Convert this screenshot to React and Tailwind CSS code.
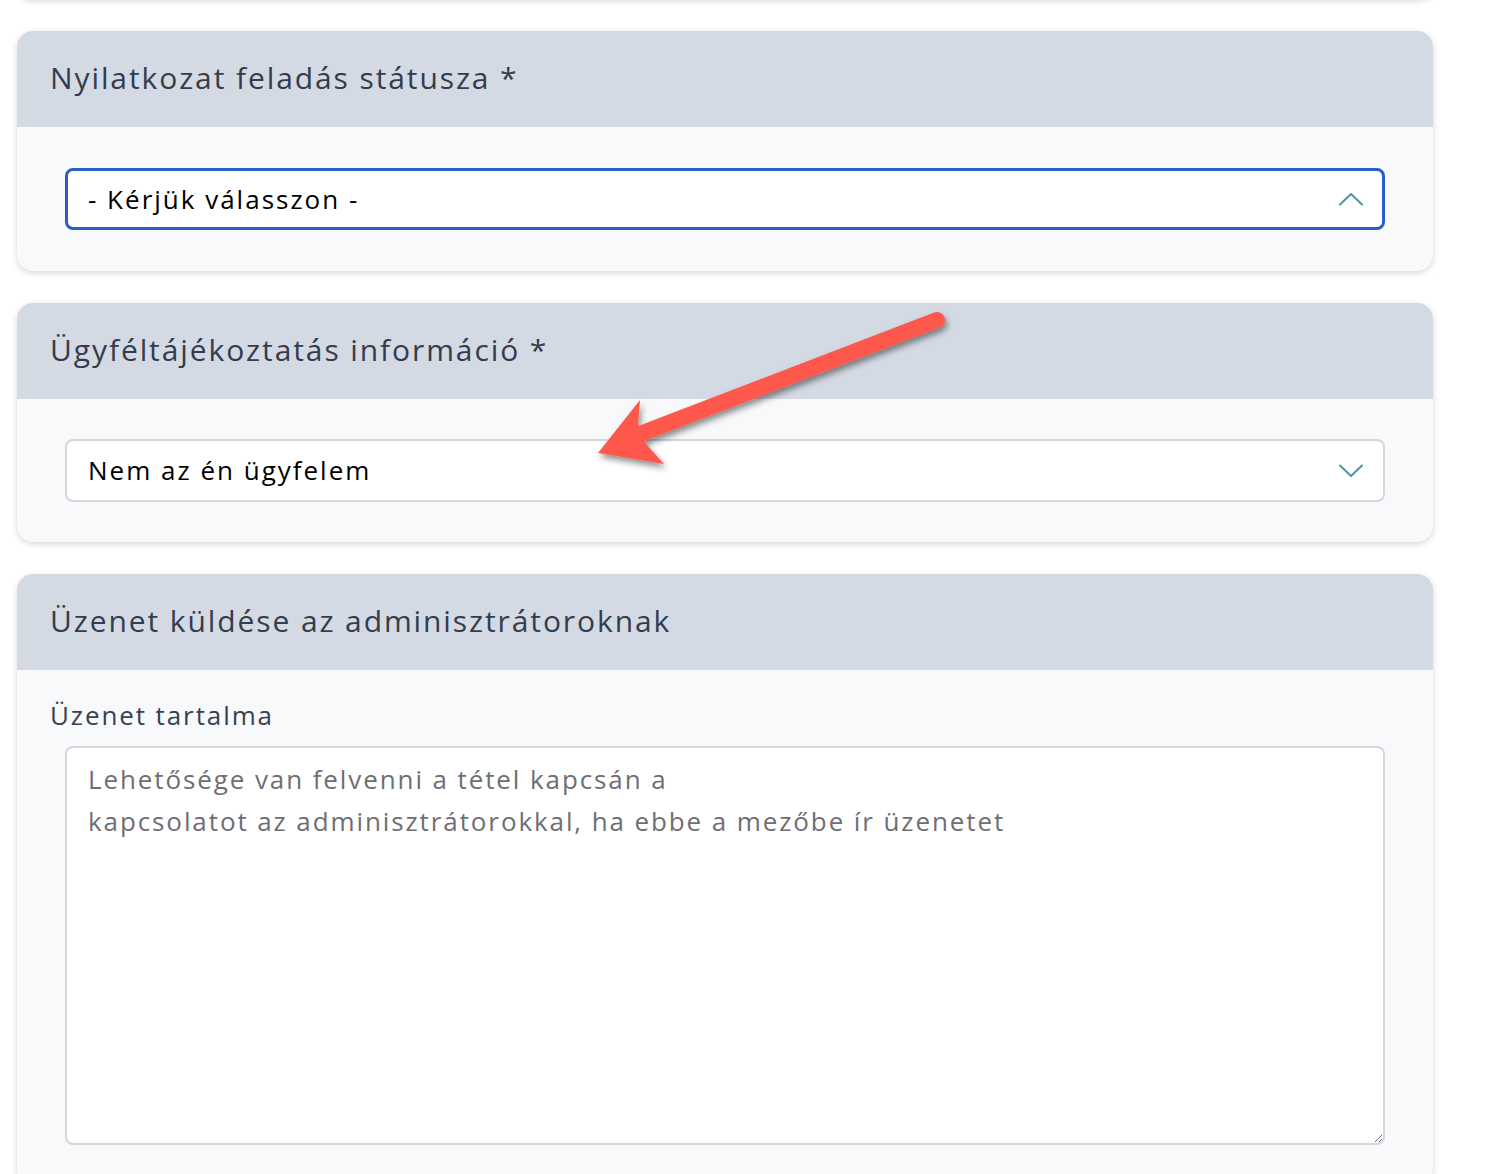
import React from 'react';

const font = { fontFamily: '"Open Sans", "DejaVu Sans", sans-serif' };

const Chevron = ({ up }) => (
  <svg width="24" height="14" viewBox="0 0 24 14" fill="none" className="shrink-0">
    <path d={up ? 'M1 12.5 L12 2 L23 12.5' : 'M1 1.5 L12 12 L23 1.5'} stroke="#4b96a2" strokeWidth="2" strokeLinecap="round" strokeLinejoin="round" />
  </svg>
);

const Card = ({ title, children }) => (
  <div className="rounded-2xl bg-[#f8f9fb] shadow-[0_2px_6px_rgba(0,0,0,0.16)] overflow-hidden">
    <div className="h-[96px] bg-[#d4dae4] px-[33px] pb-[4px] flex items-center">
      <h2 className="text-[30px] font-medium text-[#343c4d] tracking-[1.9px]">{title}</h2>
    </div>
    {children}
  </div>
);

export default function App() {
  return (
    <div className="relative w-full min-h-screen bg-white overflow-hidden" style={font}>
      <div className="w-[1416px] ml-[17px] flex flex-col gap-[32px]">
        <div className="-mt-[16px] h-[15px] rounded-b-2xl bg-[#f8f9fb] shadow-[0_2px_6px_rgba(0,0,0,0.16)]" />

        <Card title="Nyilatkozat feladás státusza *">
          <div className="px-[48px] py-[41px]">
            <div className="h-[62px] rounded-lg border-[3px] border-[#2b5fc7] bg-white flex items-center justify-between pl-[20px] pr-[19px]">
              <span className="text-[26px] text-black tracking-[2px]">- Kérjük válasszon -</span>
              <Chevron up />
            </div>
          </div>
        </Card>

        <Card title="Ügyféltájékoztatás információ *">
          <div className="px-[48px] py-[40px]">
            <div className="h-[63px] rounded-lg border-2 border-[#d5d7dd] bg-white flex items-center justify-between pl-[21px] pr-[20px]">
              <span className="text-[26px] text-black tracking-[2px]">Nem az én ügyfelem</span>
              <Chevron />
            </div>
          </div>
        </Card>

        <Card title="Üzenet küldése az adminisztrátoroknak">
          <div className="px-[33px] pt-[26px] pb-[40px]">
            <label className="block text-[26px] leading-[38px] text-[#374151] tracking-[1.9px]">Üzenet tartalma</label>
            <textarea
              className="mt-[12px] ml-[15px] block w-[1320px] h-[399px] rounded-lg border-2 border-[#d5d7dd] bg-white px-[21px] pt-[10px] text-[26px] leading-[42px] tracking-[1.9px] text-black placeholder:text-[#6e6e73] outline-none"
              style={font}
              placeholder={'Lehetősége van felvenni a tétel kapcsán a\nkapcsolatot az adminisztrátorokkal, ha ebbe a mezőbe ír üzenetet'}
            />
          </div>
        </Card>
      </div>

      <svg className="absolute top-0 left-0 pointer-events-none" width="1504" height="1174" viewBox="0 0 1504 1174">
        <defs>
          <filter id="sh" x="-20%" y="-20%" width="140%" height="140%">
            <feDropShadow dx="2" dy="4" stdDeviation="3" floodColor="#000" floodOpacity="0.45" />
          </filter>
        </defs>
        <g filter="url(#sh)" fill="#fd584b">
          <line x1="937" y1="320" x2="640" y2="434" stroke="#fd584b" strokeWidth="16" strokeLinecap="round" />
          <polygon points="598,453 640,400 638,424 646,444 664,464" />
        </g>
      </svg>
    </div>
  );
}
